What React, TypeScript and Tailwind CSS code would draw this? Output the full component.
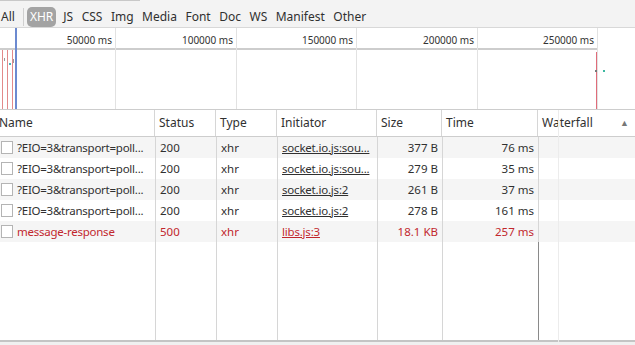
import React from "react";

type Req = {
  name: string;
  status: string;
  type: string;
  initiator: string;
  size: string;
  time: string;
  error?: boolean;
};

const requests: Req[] = [
  { name: "?EIO=3&transport=poll...", status: "200", type: "xhr", initiator: "socket.io.js:sou...", size: "377 B", time: "76 ms" },
  { name: "?EIO=3&transport=poll...", status: "200", type: "xhr", initiator: "socket.io.js:sou...", size: "279 B", time: "35 ms" },
  { name: "?EIO=3&transport=poll...", status: "200", type: "xhr", initiator: "socket.io.js:2", size: "261 B", time: "37 ms" },
  { name: "?EIO=3&transport=poll...", status: "200", type: "xhr", initiator: "socket.io.js:2", size: "278 B", time: "161 ms" },
  { name: "message-response", status: "500", type: "xhr", initiator: "libs.js:3", size: "18.1 KB", time: "257 ms", error: true },
];

const filters = ["JS", "CSS", "Img", "Media", "Font", "Doc", "WS", "Manifest", "Other"];

const ticks = [
  { x: 115, label: "50000 ms" },
  { x: 236, label: "100000 ms" },
  { x: 356, label: "150000 ms" },
  { x: 477, label: "200000 ms" },
  { x: 597, label: "250000 ms" },
];

export default function App() {
  return (
    <div
      className="w-[635px] h-[345px] flex flex-col bg-[#f0f0f0] text-[#303030] overflow-hidden"
      style={{ fontFamily: '"Segoe UI", "Noto Sans", sans-serif' }}
    >
      {/* Filter bar */}
      <div className="h-[28px] shrink-0 flex items-center bg-[#f3f3f3] border-b border-[#d8d8d8] text-[12px] relative pt-[7px]">
        <div className="absolute top-0 left-0 w-[140px] h-px bg-[#c8c8c8]" />
        <span className="pl-[1px] pr-[8px]">All</span>
        <span className="w-px h-[18px] bg-[#d0d0d0] mr-[3px]" />
        <span className="h-[20px] px-[3px] rounded-[5px] bg-[#a3a3a3] text-white flex items-center mr-[7px]">XHR</span>
        <div className="flex items-center gap-[8.5px]">
          {filters.map((f) => (
            <span key={f}>{f}</span>
          ))}
        </div>
      </div>

      {/* Overview */}
      <div className="h-[81px] shrink-0 relative bg-white">
        <div className="h-[22px] border-b-2 border-[#cdcdcd] mr-[38px]" />
        {ticks.map((t) => (
          <React.Fragment key={t.x}>
            <div className="absolute top-0 bottom-0 w-px bg-[#e2e2e2]" style={{ left: t.x }} />
            <div
              className="absolute top-[5px] text-[10px] text-[#333] text-right w-[100px]"
              style={{ left: t.x - 103 }}
            >
              {t.label}
            </div>
          </React.Fragment>
        ))}
        <div className="absolute top-[22px] bottom-0 left-[2px] w-px bg-[#e28a8a]" />
        <div className="absolute top-[22px] bottom-0 left-[7px] w-px bg-[#e28a8a]" />
        <div className="absolute top-[22px] bottom-0 left-[12px] w-px bg-[#e28a8a]" />
        <div className="absolute top-0 bottom-0 left-[15px] w-[2px] bg-[#6c8ad0]" />
        <div className="absolute top-[30px] left-[4px] w-[1px] h-[3px] bg-[#999]" />
        <div className="absolute top-[35px] left-[9px] w-[2px] h-[2px] bg-[#4ab0b8]" />
        <div className="absolute top-[31px] left-[13px] w-[1px] h-[4px] bg-[#999]" />
        <div className="absolute top-[24px] bottom-0 left-[596px] w-px bg-[#e06c7a]" />
        <div className="absolute top-[42px] left-[595px] w-[2px] h-[2px] bg-[#777]" />
        <div className="absolute top-[42px] left-[603px] w-[2px] h-[2px] bg-[#3cb8a0]" />
      </div>

      {/* Table */}
      <div className="flex-1 flex flex-col bg-white text-[11.5px] border-t border-[#cdcdcd] relative">
        <div className="absolute top-0 bottom-0 left-[558px] w-px bg-[#ececec]" />
        <div className="h-[27px] shrink-0 flex border-b border-[#cdcdcd] text-[12px]">
          <div className="w-[155px] flex items-center -ml-[1px]">Name</div>
          <div className="w-[61px] flex items-center pl-[4px] border-l border-[#d6d6d6]">Status</div>
          <div className="w-[61px] flex items-center pl-[4px] border-l border-[#d6d6d6]">Type</div>
          <div className="w-[100px] flex items-center pl-[4px] border-l border-[#d6d6d6]">Initiator</div>
          <div className="w-[65px] flex items-center pl-[4px] border-l border-[#d6d6d6]">Size</div>
          <div className="w-[96px] flex items-center pl-[4px] border-l border-[#d6d6d6]">Time</div>
          <div className="flex-1 flex items-center justify-between pl-[4px] pr-[6px] border-l border-[#d6d6d6]">
            <span>Waterfall</span>
            <span className="text-[9px] text-[#777]">▲</span>
          </div>
        </div>
        {requests.map((r, i) => {
          const c = r.error ? "text-[#c2272d]" : "text-[#303030]";
          return (
            <div key={i} className={`h-[21px] shrink-0 flex ${i % 2 === 0 ? "bg-[#f5f5f5]" : "bg-white"} ${c}`}>
              <div className="w-[155px] flex items-center pl-[1px] gap-[4px] whitespace-nowrap overflow-hidden tracking-[-0.25px]">
                <span className="w-[12px] h-[13px] border border-[#b4b4b4] bg-white shrink-0" />
                <span>{r.name}</span>
              </div>
              <div className="w-[61px] flex items-center pl-[4px] border-l border-[#d6d6d6]">{r.status}</div>
              <div className="w-[61px] flex items-center pl-[4px] border-l border-[#d6d6d6]">{r.type}</div>
              <div className="w-[100px] flex items-center pl-[4px] border-l border-[#d6d6d6] whitespace-nowrap overflow-hidden tracking-[-0.2px]">
                <span className="underline">{r.initiator}</span>
              </div>
              <div className="w-[65px] flex items-center justify-end pr-[4px] border-l border-[#d6d6d6]">{r.size}</div>
              <div className="w-[96px] flex items-center justify-end pr-[4px] border-l border-[#d6d6d6]">{r.time}</div>
              <div className="flex-1 border-l border-[#d6d6d6]" />
            </div>
          );
        })}
        <div className="flex-1 flex border-b-2 border-[#c4c4c4]">
          <div className="w-[155px]" />
          <div className="w-[61px] border-l border-[#d6d6d6]" />
          <div className="w-[61px] border-l border-[#d6d6d6]" />
          <div className="w-[100px] border-l border-[#d6d6d6]" />
          <div className="w-[65px] border-l border-[#d6d6d6]" />
          <div className="w-[96px] border-l border-[#d6d6d6]" />
          <div className="flex-1 border-l border-[#8a8a8a]" />
        </div>
      </div>
      <div className="h-[3px] shrink-0 bg-[#f0f0f0]" />
    </div>
  );
}
